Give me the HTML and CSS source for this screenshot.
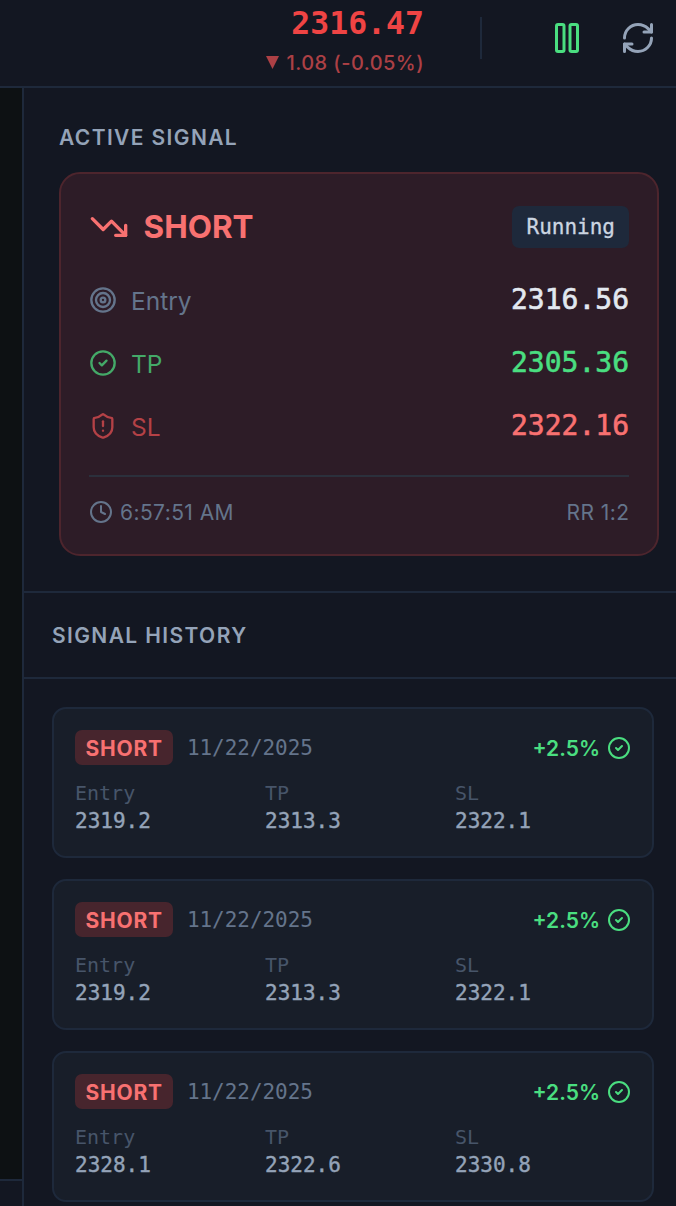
FILE: index.html
```html
<!DOCTYPE html>
<html lang="en">
<head>
<meta charset="utf-8">
<title>Signals</title>
<link rel="stylesheet" href="styles.css">
</head>
<body>
<svg class="sprite" aria-hidden="true">
  <symbol id="check" viewBox="0 0 24 24"><circle cx="12" cy="12" r="10"/><path d="m9 12 2 2 4-4"/></symbol>
</svg>
<div class="app">
  <header class="topbar">
    <div class="quote">
      <div class="quote-price">2316.47</div>
      <div class="quote-change"><svg class="caret" viewBox="0 0 13 13"><path d="M0 0h13L6.500 13z"/></svg><span>1.08 (-0.05%)</span></div>
    </div>
    <div class="topbar-divider"></div>
    <div class="actions">
      <svg class="icon icon-action live" viewBox="0 0 24 24"><rect x="14" y="3" width="5" height="18" rx="1"/><rect x="5" y="3" width="5" height="18" rx="1"/></svg>
      <svg class="icon icon-action" viewBox="0 0 24 24"><path d="M3 12a9 9 0 0 1 9-9 9.750 9.750 0 0 1 6.740 2.740L21 8"/><path d="M21 3v5h-5"/><path d="M21 12a9 9 0 0 1-9 9 9.750 9.750 0 0 1-6.740-2.740L3 16"/><path d="M8 16H3v5"/></svg>
    </div>
  </header>
  <div class="workspace">
    <div class="chart-edge"><div class="chart"></div><div class="chart-footer"></div></div>
    <aside class="sidebar">
      <section class="active">
        <h2 class="heading">ACTIVE SIGNAL</h2>
        <div class="signal">
          <div class="row signal-head">
            <div class="direction"><svg class="icon icon-trend" viewBox="0 0 24 24"><path d="M16 17h6v-6"/><path d="m22 17-8.500-8.500-5 5L2 7"/></svg><span>SHORT</span></div>
            <span class="status">Running</span>
          </div>
          <div class="levels">
            <div class="row">
              <div class="label entry"><svg class="icon icon-level" viewBox="0 0 24 24"><circle cx="12" cy="12" r="10"/><circle cx="12" cy="12" r="6"/><circle cx="12" cy="12" r="2"/></svg><span>Entry</span></div>
              <span class="value">2316.56</span>
            </div>
            <div class="row">
              <div class="label tp"><svg class="icon icon-level"><use href="#check"/></svg><span>TP</span></div>
              <span class="value value-tp">2305.36</span>
            </div>
            <div class="row">
              <div class="label sl"><svg class="icon icon-level" viewBox="0 0 24 24"><path d="M20 13c0 5-3.500 7.500-7.660 8.950a1 1 0 0 1-.67-.01C7.500 20.500 4 18 4 13V6a1 1 0 0 1 1-1c2 0 4.500-1.200 6.240-2.720a1.170 1.170 0 0 1 1.520 0C14.510 3.810 17 5 19 5a1 1 0 0 1 1 1z"/><path d="M12 8v4"/><path d="M12 16h.01"/></svg><span>SL</span></div>
              <span class="value value-sl">2322.16</span>
            </div>
          </div>
          <div class="row signal-foot">
            <div class="time"><svg class="icon icon-small" viewBox="0 0 24 24"><circle cx="12" cy="12" r="10"/><path d="M12 6v6l4 2"/></svg><span>6:57:51 AM</span></div>
            <span class="ratio">RR 1:2</span>
          </div>
        </div>
      </section>
      <h2 class="heading history-title">SIGNAL HISTORY</h2>
      <section class="history">
        <article class="trade">
          <div class="row trade-head"><span class="tag">SHORT</span><span class="date">11/22/2025</span><span class="result">+2.5%</span><svg class="icon icon-small live"><use href="#check"/></svg></div>
          <dl class="prices"><div><dt>Entry</dt><dd>2319.2</dd></div><div><dt>TP</dt><dd>2313.3</dd></div><div><dt>SL</dt><dd>2322.1</dd></div></dl>
        </article>
        <article class="trade">
          <div class="row trade-head"><span class="tag">SHORT</span><span class="date">11/22/2025</span><span class="result">+2.5%</span><svg class="icon icon-small live"><use href="#check"/></svg></div>
          <dl class="prices"><div><dt>Entry</dt><dd>2319.2</dd></div><div><dt>TP</dt><dd>2313.3</dd></div><div><dt>SL</dt><dd>2322.1</dd></div></dl>
        </article>
        <article class="trade">
          <div class="row trade-head"><span class="tag">SHORT</span><span class="date">11/22/2025</span><span class="result">+2.5%</span><svg class="icon icon-small live"><use href="#check"/></svg></div>
          <dl class="prices"><div><dt>Entry</dt><dd>2328.1</dd></div><div><dt>TP</dt><dd>2322.6</dd></div><div><dt>SL</dt><dd>2330.8</dd></div></dl>
        </article>
      </section>
    </aside>
  </div>
</div>
</body>
</html>
```
FILE: styles.css
```css
* { box-sizing: border-box; margin: 0; }

body {
  background: #131722;
  color: #94a3b8;
  font: 21px/28px Inter, sans-serif;
  overflow: hidden;
}

.sprite { display: none; }

.app {
  display: flex;
  flex-direction: column;
  height: 1206px;
  overflow: hidden;
}

.icon {
  display: block;
  flex: none;
  fill: none;
  stroke: currentColor;
  stroke-width: 2;
  stroke-linecap: round;
  stroke-linejoin: round;
}

.icon-action { width: 36px; height: 36px; }
.icon-trend { width: 40px; height: 40px; }
.icon-level { width: 28px; height: 28px; }
.icon-small { width: 24px; height: 24px; }
.live { color: #4ade80; }

.topbar {
  flex: none;
  height: 88px;
  border-bottom: 2px solid #1e293b;
  display: flex;
  justify-content: flex-end;
  align-items: center;
  padding: 0 20px 10px 0;
}

.quote {
  display: flex;
  flex-direction: column;
  align-items: flex-end;
  gap: 6px;
  padding-top: 3px;
}

.quote-price {
  color: #ef4444;
  font: 700 31.5px/40px "DejaVu Sans Mono", monospace;
}

.quote-change {
  display: flex;
  align-items: center;
  gap: 7px;
  color: #ac4045;
  font-size: 20px;
  font-weight: 500;
  letter-spacing: 0.45px;
  white-space: nowrap;
}

.caret { width: 13px; height: 13px; fill: currentColor; }

.topbar-divider {
  width: 2px;
  height: 42px;
  margin: 0 67px 0 56px;
  background: #1e293b;
}

.actions { display: flex; gap: 35px; }

.workspace { flex: 1; min-height: 0; display: flex; }

.chart-edge { width: 22px; display: flex; flex-direction: column; }
.chart { flex: 1; background: #0d1113; }
.chart-footer { height: 27px; border-top: 2px solid #1e293b; }

.sidebar {
  flex: 1;
  border-left: 2px solid #1e293b;
}

.heading {
  font-size: 21px;
  line-height: 28px;
  font-weight: 600;
  letter-spacing: 1.38px;
}

.active {
  padding: 36px 17px 35px 35px;
  border-bottom: 2px solid #1e293b;
}

.signal {
  margin-top: 20px;
  padding: 28px;
  border: 2px solid #4d252d;
  border-radius: 21px;
  background: #2d1c27;
}

.row { display: flex; align-items: center; justify-content: space-between; }

.signal-head { height: 49px; }

.direction {
  display: flex;
  align-items: center;
  gap: 14.5px;
  color: #f87171;
  font-size: 31.5px;
  font-weight: 700;
}

.status {
  padding: 7px 14px;
  border-radius: 7px;
  background: #1e293b;
  color: #cbd5e1;
  font-family: "DejaVu Sans Mono", monospace;
  -webkit-text-stroke: 0.3px;
}

.levels {
  display: flex;
  flex-direction: column;
  gap: 21px;
  padding: 28px 0;
}

.label { display: flex; align-items: center; gap: 14px; font-size: 24.5px; }
.label span { padding-top: 2px; }
.entry { color: #64748b; }
.tp { color: #44a968; }
.sl { color: #b44146; }

.value {
  color: #e2e8f0;
  font: 28px/42px "DejaVu Sans Mono", monospace;
  -webkit-text-stroke: 0.6px;
}
.value-tp { color: #4ade80; }
.value-sl { color: #f87171; }

.signal-foot {
  height: 51px;
  padding-top: 21px;
  border-top: 2px solid #2b303c;
  color: #64748b;
  letter-spacing: 0.42px;
}

.time { display: flex; align-items: center; gap: 7px; }
.time span, .ratio { padding-top: 2px; }
.ratio { margin-right: -0.4px; }

.history-title {
  padding: 29px 28px 27px;
  border-bottom: 2px solid #1e293b;
}

.history {
  display: flex;
  flex-direction: column;
  gap: 21px;
  padding: 28px 22px 28px 28px;
}

.trade {
  padding: 21px;
  border: 2px solid #1e293b;
  border-radius: 14px;
  background: #181e29;
}

.trade-head { height: 35px; }

.tag {
  padding: 4.5px 10px 2.5px 10.5px;
  border-radius: 7px;
  background: #47252d;
  color: #f87171;
  font-weight: 700;
  letter-spacing: 0.8px;
}

.date {
  margin: 0 auto 0 14px;
  color: #64748b;
  font-family: "DejaVu Sans Mono", monospace;
  letter-spacing: -0.05px;
}

.result {
  margin-right: 7px;
  padding-top: 2px;
  color: #4ade80;
  font-weight: 600;
}

.prices {
  display: grid;
  grid-template-columns: repeat(3, 1fr);
  gap: 14px;
  margin-top: 14px;
  font-family: "DejaVu Sans Mono", monospace;
}

.prices dt { color: #475569; font-size: 20px; }
.prices dd { color: #94a3b8; -webkit-text-stroke: 0.4px; }
```
